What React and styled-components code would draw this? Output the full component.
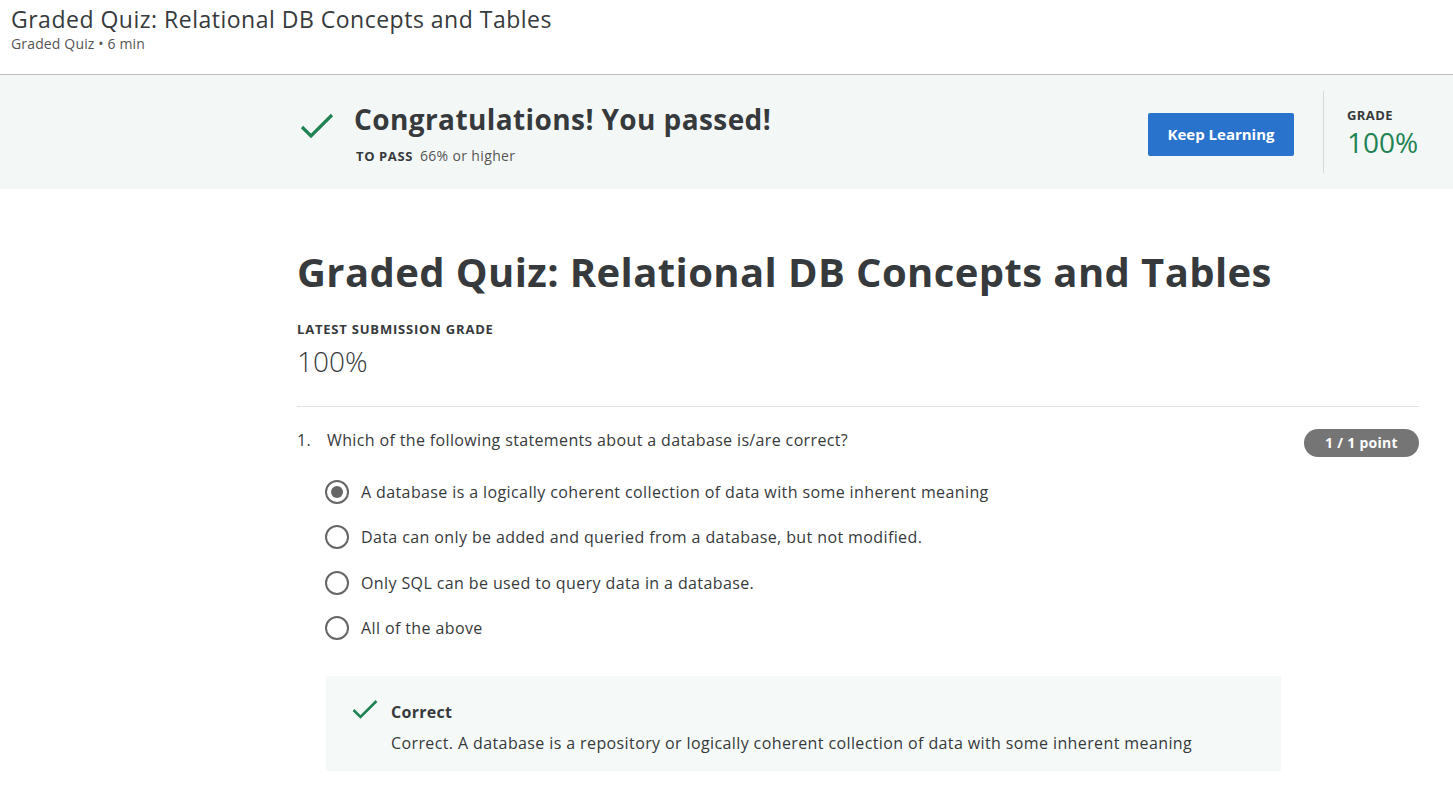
import React from "react";
import styled, { createGlobalStyle } from "styled-components";

const Global = createGlobalStyle`
  * { box-sizing: border-box; }
  html, body { margin: 0; padding: 0; background: #fff; }
  body { font-family: "Open Sans", "Noto Sans", sans-serif; color: #333; }
`;

const Page = styled.div`
  width: 1453px;
  min-height: 801px;
  background: #fff;
`;

const TopBar = styled.header`
  height: 75px;
  padding: 4px 11px 0;
  border-bottom: 1px solid #bdbdbd;
`;

const TopTitle = styled.h2`
  margin: 0;
  font-size: 23px;
  letter-spacing: 0.5px;
  font-weight: 400;
  line-height: 31px;
  color: #373a3c;
`;

const TopSub = styled.div`
  font-size: 14px;
  letter-spacing: 0.15px;
  line-height: 18px;
  color: #555;
`;

const Banner = styled.section`
  background: #f3f8f6;
  height: 114px;
  display: flex;
  align-items: center;
  padding: 0 34px 0 300px;
`;

const BannerMain = styled.div`
  display: flex;
  align-items: flex-start;
  flex: 1;
  gap: 20px;
`;

const BigCheck = styled.svg`
  width: 34px;
  height: 30px;
  margin-top: 13px;
  flex: none;
`;

const BannerTitle = styled.h3`
  margin: 1px 0 0;
  font-size: 28px;
  letter-spacing: 0.4px;
  font-weight: 700;
  line-height: 38px;
  color: #373a3c;
`;

const PassLine = styled.div`
  margin-top: 8px;
  font-size: 14px;
  letter-spacing: 0.35px;
  color: #555;
  padding-left: 2px;
  b { color: #373a3c; font-weight: 700; margin-right: 7px; font-size: 13px; letter-spacing: 0.6px; }
`;

const PrimaryButton = styled.button`
  width: 146px;
  height: 43px;
  margin-top: 4px;
  background: #2a73cc;
  border: none;
  border-radius: 2px;
  color: #fff;
  font-family: inherit;
  font-size: 15px;
  font-weight: 700;
  cursor: pointer;
  margin-right: 29px;
`;

const GradeBox = styled.div`
  border-left: 1px solid #d9d9d9;
  height: 82px;
  width: 96px;
  padding: 16px 0 0 23px;
`;

const SmallLabel = styled.div`
  font-size: 13px;
  font-weight: 700;
  letter-spacing: 0.4px;
  color: #373a3c;
  line-height: 16px;
`;

const GradeValue = styled.div`
  font-size: 28px;
  line-height: 34px;
  font-weight: 400;
  color: #1f8354;
  margin-top: 2px;
`;

const Content = styled.main`
  padding: 55px 34px 40px 297px;
`;

const H1 = styled.h1`
  margin: 0;
  font-size: 40px;
  letter-spacing: 0.4px;
  font-weight: 700;
  line-height: 56px;
  color: #373a3c;
`;

const LatestLabel = styled(SmallLabel)`
  margin-top: 21px;
  letter-spacing: 0.8px;
`;

const LatestValue = styled.div`
  font-size: 28px;
  font-weight: 300;
  line-height: 36px;
  color: #373a3c;
  margin-top: 6px;
`;

const Rule = styled.hr`
  border: none;
  border-top: 1px solid #e1e1e1;
  margin: 27px 0 0;
`;

const QuestionRow = styled.div`
  display: flex;
  align-items: flex-start;
  margin-top: 21px;
  font-size: 16px;
  line-height: 24px;
  letter-spacing: 0.36px;
  color: #373a3c;
`;

const QNum = styled.span`
  width: 30px;
  flex: none;
`;

const QText = styled.span`
  flex: 1;
`;

const Pill = styled.span`
  background: #757575;
  color: #fff;
  font-size: 14px;
  letter-spacing: 0.3px;
  font-weight: 700;
  height: 28px;
  line-height: 28px;
  padding: 0 21px;
  border-radius: 14px;
  margin-top: 1px;
`;

const Options = styled.div`
  margin-top: 23px;
  padding-left: 28px;
  display: flex;
  flex-direction: column;
  gap: 21.3px;
`;

const Option = styled.label`
  display: flex;
  align-items: center;
  gap: 12px;
  font-size: 16px;
  letter-spacing: 0.39px;
  line-height: 24px;
  color: #373a3c;
`;

const Radio = styled.span`
  width: 24px;
  height: 24px;
  border-radius: 50%;
  border: 2px solid #666;
  display: flex;
  align-items: center;
  justify-content: center;
  flex: none;
  &::after {
    content: "";
    width: 12px;
    height: 12px;
    border-radius: 50%;
    background: ${p => (p.$checked ? "#666" : "transparent")};
  }
`;

const Feedback = styled.div`
  margin: 36px 138px 0 29px;
  background: #f5f9f8;
  padding: 24px 24px 16px 26px;
  display: flex;
  gap: 13px;
`;

const SmallCheck = styled.svg`
  width: 26px;
  height: 22px;
  flex: none;
  margin-top: -1px;
`;

const FbTitle = styled.div`
  font-size: 16px;
  letter-spacing: 0.3px;
  font-weight: 700;
  line-height: 24px;
  color: #373a3c;
`;

const FbText = styled.div`
  margin-top: 7px;
  font-size: 16px;
  letter-spacing: 0.39px;
  line-height: 24px;
  color: #373a3c;
`;

const options = [
  { text: "A database is a logically coherent collection of data with some inherent meaning", checked: true },
  { text: "Data can only be added and queried from a database, but not modified." },
  { text: "Only SQL can be used to query data in a database." },
  { text: "All of the above" },
];

export default function App() {
  return (
    <Page>
      <Global />
      <TopBar>
        <TopTitle>Graded Quiz: Relational DB Concepts and Tables</TopTitle>
        <TopSub>Graded Quiz • 6 min</TopSub>
      </TopBar>
      <Banner>
        <BannerMain>
          <BigCheck viewBox="0 0 34 30">
            <path d="M2 15 L11 24 L32 3" fill="none" stroke="#1f8354" strokeWidth="3.2" />
          </BigCheck>
          <div>
            <BannerTitle>Congratulations! You passed!</BannerTitle>
            <PassLine><b>TO PASS</b>66% or higher</PassLine>
          </div>
        </BannerMain>
        <PrimaryButton>Keep Learning</PrimaryButton>
        <GradeBox>
          <SmallLabel>GRADE</SmallLabel>
          <GradeValue>100%</GradeValue>
        </GradeBox>
      </Banner>
      <Content>
        <H1>Graded Quiz: Relational DB Concepts and Tables</H1>
        <LatestLabel>LATEST SUBMISSION GRADE</LatestLabel>
        <LatestValue>100%</LatestValue>
        <Rule />
        <QuestionRow>
          <QNum>1.</QNum>
          <QText>Which of the following statements about a database is/are correct?</QText>
          <Pill>1 / 1 point</Pill>
        </QuestionRow>
        <Options>
          {options.map(o => (
            <Option key={o.text}>
              <Radio $checked={o.checked} />
              {o.text}
            </Option>
          ))}
        </Options>
        <Feedback>
          <SmallCheck viewBox="0 0 26 22">
            <path d="M1.5 11 L8.5 18 L24.5 2" fill="none" stroke="#1f8354" strokeWidth="2.6" />
          </SmallCheck>
          <div>
            <FbTitle>Correct</FbTitle>
            <FbText>Correct. A database is a repository or logically coherent collection of data with some inherent meaning</FbText>
          </div>
        </Feedback>
      </Content>
    </Page>
  );
}
